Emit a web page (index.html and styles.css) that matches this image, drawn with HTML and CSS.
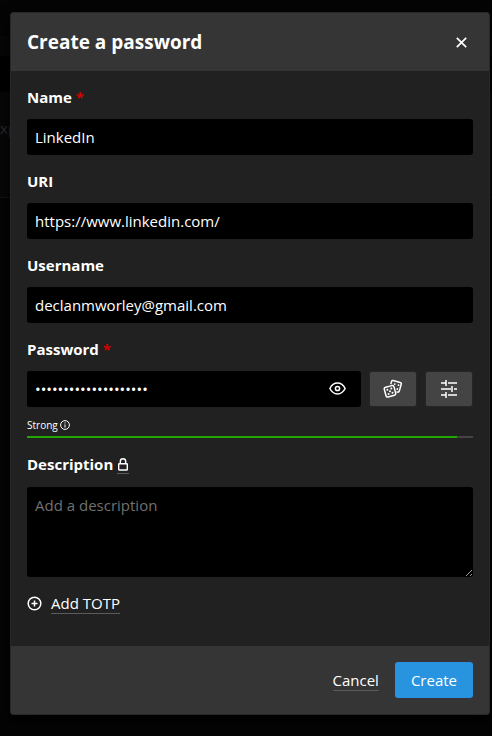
FILE: index.html
```html
<!DOCTYPE html>
<html lang="en">
<head>
<meta charset="utf-8">
<meta name="viewport" content="width=device-width, initial-scale=1">
<title>Create a password</title>
<link rel="stylesheet" href="styles.css">
</head>
<body>
<div class="workspace" aria-hidden="true">
  <div class="workspace-top"></div>
  <div class="workspace-search"></div>
  <div class="workspace-actions">xp</div>
  <div class="workspace-head"></div>
</div>
<main class="dialog" role="dialog" aria-labelledby="dialog-title">
  <header class="dialog-header">
    <h1 id="dialog-title">Create a password</h1>
    <button type="button" class="close" aria-label="Close">
      <svg width="11" height="11" viewBox="0 0 11 11" fill="none" stroke="currentColor" stroke-width="1.700"><path d="M.8.8l9.4 9.4M10.2.8L.8 10.2"/></svg>
    </button>
  </header>
  <form class="dialog-form">
    <div class="dialog-body">
      <div class="field">
        <label for="name">Name <span class="required">*</span></label>
        <input id="name" type="text" value="LinkedIn">
      </div>
      <div class="field">
        <label for="uri">URI</label>
        <input id="uri" type="text" value="https://www.linkedin.com/">
      </div>
      <div class="field">
        <label for="username">Username</label>
        <input id="username" type="text" value="declanmworley@gmail.com">
      </div>
      <div class="field">
        <label for="password">Password <span class="required">*</span></label>
        <div class="password-row">
          <div class="password-box">
            <input id="password" type="password" value="abcdefghijklmnopqrst">
            <button type="button" class="reveal" aria-label="View password">
              <svg width="17" height="14" viewBox="0 0 17 14" fill="none" stroke="currentColor" stroke-width="1.500"><path d="M.9 6.500C2.600 3 5.300 1.100 8.500 1.100S14.400 3 16.100 6.500C14.400 10 11.700 11.900 8.500 11.900S2.600 10 .9 6.500z"/><circle cx="8.500" cy="6.500" r="2.100"/></svg>
            </button>
          </div>
          <button type="button" class="tool" aria-label="Generate password">
            <svg width="20" height="20" viewBox="0 0 20 20" fill="none" stroke="currentColor" stroke-width="1.500" stroke-linejoin="round"><rect x="2" y="7.300" width="10" height="10" rx="1.800" transform="rotate(-15 7 12.300)"/><path d="M7.800 5.200L8.500 2.600C8.700 1.700 9.300 1.400 10.100 1.600L17.200 3.500C18.100 3.700 18.500 4.300 18.200 5.200L16.300 12.100C16 13 15.400 13.300 14.500 13.100L13.500 12.800"/><g fill="currentColor" stroke="none"><circle cx="4.400" cy="10.700" r="1"/><circle cx="8.300" cy="9.600" r="1"/><circle cx="7" cy="12.300" r="1"/><circle cx="5.600" cy="14.900" r="1"/><circle cx="9.500" cy="13.700" r="1"/><circle cx="11.700" cy="5.100" r=".9"/><circle cx="15.500" cy="6.200" r=".9"/><circle cx="14.300" cy="10" r=".9"/></g></svg>
          </button>
          <button type="button" class="tool" aria-label="Generator settings">
            <svg width="16" height="18" viewBox="0 0 16 18" fill="none" stroke="currentColor" stroke-width="1.500"><path d="M0 3h5M7 3h9M5 0v6M0 9h10M13 9h3M11 6v6M0 15h5M7 15h9M5 12v6"/></svg>
          </button>
        </div>
        <div class="strength">
          <span class="strength-label">Strong
            <svg width="10" height="12" viewBox="0 0 10 12" fill="none" stroke="currentColor"><circle cx="5" cy="5" r="4.400"/><path d="M5 4.400v3.200M5 2.400v1.100"/></svg>
          </span>
          <div class="meter"><div class="meter-fill" style="width:96.400%"></div></div>
        </div>
      </div>
      <div class="field">
        <label for="description">Description <span class="lock"><svg width="10" height="13" viewBox="0 0 10 13" fill="none" stroke="currentColor" stroke-width="1.400"><rect x=".7" y="5.700" width="8.600" height="6.300" rx=".6"/><path d="M2.300 5.700V3.400a2.700 2.700 0 0 1 5.400 0v2.300"/></svg></span></label>
        <textarea id="description" placeholder="Add a description"></textarea>
      </div>
      <button type="button" class="totp">
        <svg width="15" height="15" viewBox="0 0 15 15" fill="none" stroke="currentColor" stroke-width="1.500"><circle cx="7.500" cy="7.500" r="6.300"/><path d="M7.500 4.500v6M4.500 7.500h6"/></svg>
        <span class="underlined">Add TOTP</span>
      </button>
    </div>
    <footer class="dialog-footer">
      <button type="button" class="cancel"><span class="underlined">Cancel</span></button>
      <button type="submit" class="create">Create</button>
    </footer>
  </form>
</main>
</body>
</html>
```
FILE: styles.css
```css
* {
  box-sizing: border-box;
}

body {
  margin: 0;
  min-height: 100vh;
  background: #040404;
  color: #fff;
  font: 15px/20px "Open Sans", "Noto Sans", sans-serif;
}

button,
input,
textarea {
  margin: 0;
  border: 0;
  color: inherit;
  font: inherit;
}

button {
  padding: 0;
  background: none;
  cursor: pointer;
}

svg {
  display: block;
  flex: none;
}

.workspace {
  position: absolute;
  inset: 0;
  z-index: -1;
  overflow: hidden;
  color: #303030;
}

.workspace-top {
  height: 36px;
}

.workspace-search {
  height: 56px;
  background: linear-gradient(#070707 20px, #000 20px);
}

.workspace-actions {
  height: 66px;
  padding: 26px 0;
  background: #080808;
}

.workspace-head {
  height: 40px;
  border-bottom: 1px solid #161616;
  background: #080808;
}

.dialog {
  margin: 12px 2px 0 10px;
  overflow: hidden;
  border: 1px solid #282828;
  border-radius: 3px;
  background: #212121;
  box-shadow: 0 8px 16px #000;
}

.dialog-header {
  display: flex;
  align-items: center;
  justify-content: space-between;
  height: 58px;
  padding: 0 16px;
  background: #353535;
}

h1 {
  margin: 0;
  font-size: 19px;
  line-height: 24px;
}

.close {
  padding: 6px;
}

.dialog-body {
  display: flex;
  flex-direction: column;
  gap: 16px;
  padding: 16px 16px 32px;
}

.field {
  display: flex;
  flex-direction: column;
  gap: 12px;
}

label {
  font-weight: 700;
}

.required {
  color: #d40101;
}

input,
textarea {
  width: 100%;
  padding: 0 8px;
  border-radius: 3px;
  outline: 0;
  background: #000;
}

input {
  height: 36px;
}

textarea {
  display: block;
  height: 90px;
  padding: 8px;
  resize: vertical;
}

textarea::placeholder {
  color: #707070;
}

.password-row {
  display: flex;
  align-items: center;
  gap: 8px;
}

.password-box {
  display: flex;
  flex: 1;
  align-items: center;
  border-radius: 3px;
  background: #000;
}

.password-box input {
  flex: 1;
  min-width: 0;
}

.reveal {
  padding: 8px 15px;
}

.tool {
  display: grid;
  place-items: center;
  width: 48px;
  height: 36px;
  border: 1px solid #262626;
  border-radius: 3px;
  background: #444;
}

.strength {
  display: flex;
  flex-direction: column;
  gap: 4px;
}

.strength-label {
  display: flex;
  align-items: center;
  gap: 2px;
  font-size: 10px;
  line-height: 13px;
}

.meter {
  height: 2px;
  background: #444;
}

.meter-fill {
  height: 2px;
  background: #22a605;
}

.lock {
  display: inline-block;
  padding: 0 1px 2px;
  border-bottom: 1px solid #5c5c5c;
  vertical-align: middle;
}

.field:last-of-type {
  gap: 13px;
}

.totp {
  display: flex;
  align-items: center;
  align-self: flex-start;
  gap: 9px;
}

.underlined {
  border-bottom: 1px solid #5c5c5c;
}

.dialog-footer {
  display: flex;
  align-items: center;
  justify-content: flex-end;
  gap: 16px;
  padding: 16px;
  background: #353535;
}

.create {
  height: 36px;
  padding: 0 16px;
  border-radius: 3px;
  background: #2894df;
}
```
